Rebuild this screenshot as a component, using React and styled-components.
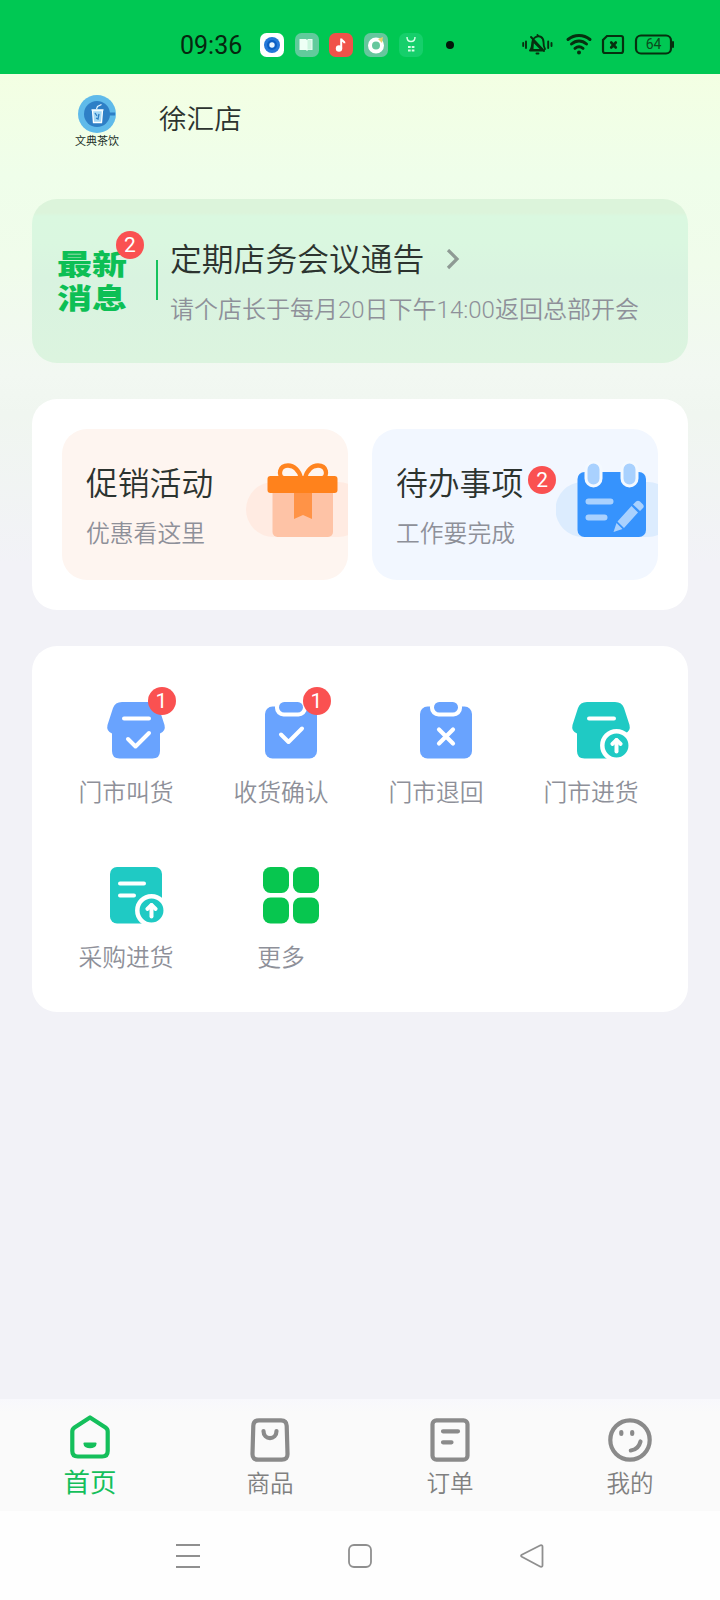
import styled, { createGlobalStyle } from 'styled-components'

const GlobalStyle = createGlobalStyle`
  * { box-sizing: border-box; }
  body {
    margin: 0;
    font-family: Roboto, "Noto Sans CJK SC", sans-serif;
    color: #2c332f;
    background: #f2f2f7;
  }
  svg { display: block; flex: none; }
`

const Page = styled.div`
  width: 720px;
  height: 1600px;
  display: flex;
  flex-direction: column;
  overflow: hidden;
  background: #f2f2f7;
`

const StatusBar = styled.div`
  height: 74px;
  flex: none;
  display: flex;
  align-items: center;
  padding: 16px 46px 0 180px;
  background: #00c853;
  color: #06260f;
`
const Time = styled.div`
  width: 80px;
  padding-top: 2px;
  font-size: 25px;
  line-height: 30px;
`
const AppIcons = styled.div`
  display: flex;
  gap: 10.7px;
`
const Dot = styled.div`
  width: 8px;
  height: 8px;
  margin-left: 23px;
  border-radius: 50%;
  background: #03170a;
`
const SystemIcons = styled.div`
  margin-left: auto;
  display: flex;
  align-items: center;
`

const Main = styled.main`
  flex: 1;
  padding: 0 32px;
  background: linear-gradient(#f3ffe3 0px, #effeea 100px, #f0fceb 190px, #f2f8f2 300px, #f0f6f0 340px, #f2f2f7 490px);
`
const StoreHeader = styled.header`
  height: 125px;
  display: flex;
  padding: 21px 0 0 39px;
`
const Brand = styled.div`
  width: 52px;
  display: flex;
  flex-direction: column;
  align-items: center;
`
const BrandName = styled.div`
  font-family: "Noto Sans CJK SC", sans-serif;
  font-size: 11px;
  line-height: 14px;
  white-space: nowrap;
  color: #223029;
`
const StoreName = styled.h1`
  margin: 6px 0 0 36px;
  font-size: 27.6px;
  line-height: 38px;
  font-weight: 350;
`

const Notice = styled.section`
  height: 164px;
  display: flex;
  padding: 0 24px;
  border-radius: 25px;
  background: linear-gradient(#dcf4db 0, #dcf4db 14px, #daf8e0 17px, #daf7e0 44px, #d9f3e0 80px, #dcf4df 164px);
`
const NoticeTag = styled.div`
  position: relative;
  width: 70px;
  height: 68px;
  margin-top: 50px;
`
const TagText = styled.div`
  padding-left: 1px;
  font-size: 35px;
  line-height: 41px;
  font-weight: 900;
  color: #0dbf55;
  white-space: nowrap;
  transform: scaleY(0.82);
  transform-origin: top;
`
const Badge = styled.span`
  display: flex;
  align-items: center;
  justify-content: center;
  width: 28px;
  height: 28px;
  border-radius: 50%;
  background: #fa5151;
  color: #fff;
  font-size: 21px;
  line-height: 28px;
  font-weight: 400;
`
const PinnedBadge = styled(Badge)`
  position: absolute;
  top: ${p => p.$top}px;
  left: ${p => p.$left}px;
`
const Divider = styled.div`
  width: 2px;
  height: 40px;
  margin: 61px 12px 0 30px;
  background: #16c35d;
`
const NoticeTitle = styled.h2`
  display: flex;
  align-items: center;
  gap: 21px;
  margin: 38px 0 0;
  font-size: 31.8px;
  line-height: 46px;
  font-weight: 350;
`
const Muted = styled.p`
  margin: ${p => p.$top || 0}px 0 0;
  font-size: ${p => p.$size || 23.8}px;
  line-height: 34px;
  font-weight: 350;
  color: #8e9099;
  white-space: nowrap;
`

const Panel = styled.section`
  margin-top: 36px;
  border-radius: 25px;
  background: #fff;
`
const PromoRow = styled(Panel)`
  height: 211px;
  display: flex;
  gap: 24px;
  padding: 30px;
`
const Promo = styled.div`
  width: 286px;
  height: 151px;
  display: flex;
  justify-content: space-between;
  padding-left: 24px;
  border-radius: 25px;
  overflow: hidden;
  background: ${p => p.$bg};
`
const PromoText = styled.div`
  padding-top: 32px;
`
const PromoTitle = styled.h3`
  display: flex;
  align-items: flex-start;
  gap: 5px;
  margin: 0 -60px 0 0;
  font-size: 31.8px;
  line-height: 46px;
  font-weight: 350;
  white-space: nowrap;
  ${Badge} { margin-top: 5px; }
`

const MenuGrid = styled(Panel)`
  height: 366px;
  display: grid;
  grid-template-columns: repeat(4, 155px);
  grid-auto-rows: 165px;
  padding: 51px 0 0 16.5px;
`
const MenuItem = styled.div`
  display: flex;
  flex-direction: column;
  align-items: center;
`
const MenuIcon = styled.div`
  position: relative;
  width: 68px;
  height: 68px;
  margin-left: 19px;
`

const TabBar = styled.nav`
  height: 112px;
  flex: none;
  display: grid;
  grid-template-columns: repeat(4, 1fr);
  background: linear-gradient(#f8f8fc, #fafafa 14px);
`
const Tab = styled.div`
  display: flex;
  flex-direction: column;
  align-items: center;
  padding-top: ${p => (p.$active ? 14 : 17)}px;
  font-size: ${p => (p.$active ? 26.5 : 23.5)}px;
  line-height: 36px;
  font-weight: ${p => (p.$active ? 400 : 350)};
  color: ${p => (p.$active ? '#14bf5b' : '#808080')};
`
const TabLabel = styled.span`
  margin-top: ${p => (p.$active ? 4 : 2)}px;
`
const NavBar = styled.div`
  height: 89px;
  flex: none;
  display: flex;
  justify-content: space-between;
  padding: 32px 175px 0;
  background: #fefefe;
`

const BLUE = '#69a3fe'
const TEAL = '#1fcac4'

const Tile = ({ color, children }) => (
  <svg width="24" height="24" viewBox="0 0 24 24">
    <rect width="24" height="24" rx="6.500" fill={color} />
    {children}
  </svg>
)

const StatusApps = () => (
  <AppIcons>
    <Tile color="#fff">
      <circle cx="12" cy="12" r="8" fill="#2478d8" />
      <circle cx="12" cy="12" r="5" fill="#0b5fc4" />
      <circle cx="12" cy="12" r="2.7" fill="#e8f6ff" />
    </Tile>
    <Tile color="#61cb9c">
      <path d="M4.500 6h6.500l1 1 1-1h4.500v11H13l-1 1-1-1H4.500z" fill="#eefff5" />
      <path d="M12.500 7h4v9.500h-4z" fill="#cdf5df" />
    </Tile>
    <Tile color="#f0524a">
      <circle cx="10" cy="15.500" r="3.200" fill="#fff" />
      <path d="M12.200 15.500V5.500c0 2.500 3.400 2.300 3.300 4.700" fill="none" stroke="#fff" strokeWidth="2" />
    </Tile>
    <Tile color="#66c79d">
      <circle cx="12" cy="12.500" r="6" fill="none" stroke="#fff" strokeWidth="4" />
      <path d="m14 6 5-2-1 6z" fill="#e6d36b" />
    </Tile>
    <Tile color="#16cf6b">
      <path d="M8 4c0 6 8 6 8 0" fill="none" stroke="#d5ffe5" strokeWidth="1.500" />
      <path d="M9 13h2.700v2H9zM12.700 13h2.700v2h-2.700zM9 16.500h2.700v2H9zM12.700 16.500h2.700v2h-2.700z" fill="#d5ffe5" />
    </Tile>
  </AppIcons>
)

const StatusSystem = () => (
  <svg width="152" height="24" viewBox="522 33 152 24" fill="none" stroke="#06300f" strokeLinecap="round">
    <g strokeWidth="1.9">
      <path d="M523.2 43v3M526 41.500v6.500M551.5 43v3M548.2 41.500v6.500" />
      <path d="M530 50.500h14M530 50.500c2-2 2-4 2.300-8 .2-1.800.7-3 1.600-4M535 37.500c4.500-3 8.500 0 8.500 4.500 0 3 .2 5 1.500 7M531 37l13 14M537.500 35v1M536.500 53.500h2" />
      <path d="M533 41l9 9h-9.500z" />
    </g>
    <g strokeWidth="3">
      <path d="M568 39.500c6.500-5.500 15.500-5.500 22 0M571.500 44c4.500-4 10.500-4 15 0M575 48.300c2.500-2 5.500-2 8 0" />
    </g>
    <circle cx="579" cy="52.500" r="2" fill="#06300f" stroke="none" />
    <path d="M607 36h14q2 0 2 2v13q0 2-2 2h-16q-2 0-2-2V40z" strokeWidth="2.200" />
    <path d="m611.200 42.500 4.600 5m0-5-4.600 5" strokeWidth="2.600" />
    <rect x="636" y="35.500" width="35" height="18" rx="5" strokeWidth="2.200" />
    <path d="M673 42v5" strokeWidth="2" />
    <text x="653.500" y="49.300" textAnchor="middle" fontSize="14" fill="#0c4a1c" stroke="none">64</text>
  </svg>
)

const Logo = () => (
  <svg width="38" height="38" viewBox="0 0 38 38">
    <circle cx="19" cy="19" r="19" fill="#5fbaea" />
    <circle cx="19" cy="19" r="13" fill="#2e7fc6" />
    <path d="M30 17.500h7v3h-7z" fill="#2e7fc6" />
    <path d="M14.500 15.500h10l-1 12h-8z" fill="#a5d8f5" stroke="#fff" strokeWidth="1.300" />
    <path d="M13.500 14.800h12M18.500 14l1-2.500 4-2" fill="none" stroke="#e9f7ff" strokeWidth="1.200" />
    <path d="m17 18 2 3m2-2-1 5-2-1" stroke="#2e7fc6" strokeWidth="1.300" fill="none" />
  </svg>
)

const Chevron = () => (
  <svg width="16" height="22" viewBox="0 1 16 22" fill="none" stroke="#8e9a94" strokeWidth="3.200">
    <path d="m3 2 9 9-9 9" />
  </svg>
)

const Gift = () => (
  <svg width="102" height="151" viewBox="0 0 102 151">
    <rect x="0" y="53" width="120" height="55" rx="27.500" fill="#ffebe2" />
    <rect x="26.500" y="58" width="60.500" height="50" rx="5" fill="#fec3a6" />
    <path d="M48 60h18v30l-9-4-9 4z" fill="#ff9347" />
    <g fill="none" stroke="#ff8420" strokeWidth="4.400">
      <path d="M55 49c-2-8-7-12.500-13-12.500-9 0-10 10-5 12.500M59 49c2-8 7-12.500 13-12.500 9 0 10 10 5 12.500" />
    </g>
    <rect x="21.500" y="47" width="70" height="17" rx="3" fill="#ff821c" />
  </svg>
)

const Planner = () => (
  <svg width="102" height="151" viewBox="0.500 0 102 151">
    <rect x="0" y="53" width="120" height="55" rx="27.500" fill="#dcecfe" />
    <rect x="22" y="43" width="68.500" height="65" rx="7" fill="#3693fd" />
    <g fill="#a9d1fe" stroke="#f4f9ff" strokeWidth="3">
      <rect x="30.500" y="33" width="15" height="24" rx="7.500" />
      <rect x="66.500" y="33" width="15" height="24" rx="7.500" />
    </g>
    <path d="M33 72.500h22M33 88.500h16" stroke="#a9d1fe" strokeWidth="6" strokeLinecap="round" />
    <path d="m58 103 3-9 6 6zM62 92.500l14-15.500 6.500 6.500-14 15.500zM77.500 75.500l3-3q2-1.500 4 0l3 3q1.500 2 0 3.500L84.500 82z" fill="#a9d1fe" />
  </svg>
)

// The menu icons share one 58x58 drawing area.
const Glyph = ({ children }) => (
  <svg width="68" height="68" viewBox="-5 -5 68 68" fill="none" strokeLinecap="round" strokeLinejoin="round">
    {children}
  </svg>
)

const Box = ({ color }) => (
  <>
    <path d="M15 0h28q7 0 9 6l5.500 17q1.500 6-4.500 8.500V49q0 7.500-7.500 7.500h-33Q5 56.500 5 49V31.500Q-1 29 .5 23L6 6q2-6 9-6z" fill={color} />
    <path d="M17 16.500h25" stroke="#fff" strokeWidth="4" />
  </>
)

const Clipboard = () => (
  <>
    <rect x="3" y="4.500" width="52" height="52" rx="7.500" fill={BLUE} />
    <rect x="13" y="-4" width="32" height="18.500" rx="8.500" fill="#fff" />
    <rect x="17" width="24" height="10.500" rx="5.200" fill={BLUE} />
  </>
)

const UpArrow = () => (
  <>
    <circle cx="44.500" cy="43.500" r="14.200" fill={TEAL} stroke="#fff" strokeWidth="4.500" />
    <path d="M44.500 49.500V38" stroke="#fff" strokeWidth="4" />
    <path d="m40.300 42 4.200-4 4.200 4" stroke="#fff" strokeWidth="3.800" />
  </>
)

const RequestIcon = () => (
  <Glyph>
    <Box color={BLUE} />
    <path d="m21 37 7.500 7.500L42 31" stroke="#fff" strokeWidth="4" />
  </Glyph>
)
const ConfirmIcon = () => (
  <Glyph>
    <Clipboard />
    <path d="m19 32.500 7.500 7.500L40 26.500" stroke="#fff" strokeWidth="4" />
  </Glyph>
)
const ReturnIcon = () => (
  <Glyph>
    <Clipboard />
    <path d="m22 27.500 14 14m0-14-14 14" stroke="#fff" strokeWidth="4.200" />
  </Glyph>
)
const StockIcon = () => (
  <Glyph>
    <Box color={TEAL} />
    <UpArrow />
  </Glyph>
)
const PurchaseIcon = () => (
  <Glyph>
    <rect x="3" width="52" height="56.500" rx="7" fill={TEAL} />
    <path d="M13 16.500h24M13 28.500h14" stroke="#fff" strokeWidth="4" />
    <UpArrow />
  </Glyph>
)
const MoreIcon = () => (
  <Glyph>
    <g fill="#07c64f">
      <rect x="1" width="26" height="26" rx="7.500" />
      <rect x="31" width="26" height="26" rx="7.500" />
      <rect x="1" y="30.500" width="26" height="26" rx="7.500" />
      <rect x="31" y="30.500" width="26" height="26" rx="7.500" />
    </g>
  </Glyph>
)

const menu = [
  { name: '门市叫货', icon: <RequestIcon />, count: 1 },
  { name: '收货确认', icon: <ConfirmIcon />, count: 1 },
  { name: '门市退回', icon: <ReturnIcon /> },
  { name: '门市进货', icon: <StockIcon /> },
  { name: '采购进货', icon: <PurchaseIcon /> },
  { name: '更多', icon: <MoreIcon /> },
]

const TabGlyph = ({ color = '#8a8a8a', children }) => (
  <svg width="48" height="48" viewBox="0 0 48 48" fill="none" stroke={color} strokeWidth="4.200" strokeLinecap="round" strokeLinejoin="round">
    {children}
  </svg>
)

const tabs = [
  {
    name: '首页',
    active: true,
    icon: (
      <TabGlyph color="#14bf5b">
        <path d="M24 4.500 8.500 14.500Q6.300 16 6.300 18.500V38q0 5.500 5.500 5.500h24.400q5.500 0 5.500-5.500V18.500q0-2.500-2.200-4z" />
        <path d="M18.500 30.500h11c0 5-11 5-11 0z" fill="#14bf5b" strokeWidth="2.200" />
      </TabGlyph>
    ),
  },
  {
    name: '商品',
    icon: (
      <TabGlyph>
        <path d="M13 4.300h22q5.500 0 5.700 5.500l.8 28q.2 5.900-5.700 5.900H12.200q-5.900 0-5.700-5.900l.8-28q.2-5.500 5.700-5.500z" />
        <path d="M17.500 15c0 9.500 13 9.500 13 0" />
      </TabGlyph>
    ),
  },
  {
    name: '订单',
    icon: (
      <TabGlyph>
        <rect x="6.500" y="4.300" width="35" height="39.400" rx="4" />
        <path d="M17 15.300h15M17 26.300h8.500" />
      </TabGlyph>
    ),
  },
  {
    name: '我的',
    icon: (
      <TabGlyph>
        <circle cx="24" cy="24" r="19.700" />
        <path d="M15.300 16v2M26.200 16v2M34.500 25.500Q32.500 33.500 24.800 34.500" />
      </TabGlyph>
    ),
  },
]

const App = () => {
  return (
    <>
      <GlobalStyle />
      <Page>
        <StatusBar>
          <Time>09:36</Time>
          <StatusApps />
          <Dot />
          <SystemIcons>
            <StatusSystem />
          </SystemIcons>
        </StatusBar>
        <Main>
          <StoreHeader>
            <Brand>
              <Logo />
              <BrandName>文典茶饮</BrandName>
            </Brand>
            <StoreName>徐汇店</StoreName>
          </StoreHeader>
          <Notice>
            <NoticeTag>
              <TagText>最新<br />消息</TagText>
              <PinnedBadge $top={-18} $left={60}>2</PinnedBadge>
            </NoticeTag>
            <Divider />
            <div>
              <NoticeTitle>
                定期店务会议通告
                <Chevron />
              </NoticeTitle>
              <Muted $top={10} $size={24}>请个店长于每月20日下午14:00返回总部开会</Muted>
            </div>
          </Notice>
          <PromoRow>
            <Promo $bg="#fef5f0">
              <PromoText>
                <PromoTitle>促销活动</PromoTitle>
                <Muted $top={10}>优惠看这里</Muted>
              </PromoText>
              <Gift />
            </Promo>
            <Promo $bg="#f2f7ff">
              <PromoText>
                <PromoTitle>
                  待办事项
                  <Badge>2</Badge>
                </PromoTitle>
                <Muted $top={10}>工作要完成</Muted>
              </PromoText>
              <Planner />
            </Promo>
          </PromoRow>
          <MenuGrid>
            {menu.map(item => (
              <MenuItem key={item.name}>
                <MenuIcon>
                  {item.icon}
                  {item.count && <PinnedBadge $top={-10} $left={46}>{item.count}</PinnedBadge>}
                </MenuIcon>
                <Muted $top={11}>{item.name}</Muted>
              </MenuItem>
            ))}
          </MenuGrid>
        </Main>
        <TabBar>
          {tabs.map(tab => (
            <Tab key={tab.name} $active={tab.active}>
              {tab.icon}
              <TabLabel $active={tab.active}>{tab.name}</TabLabel>
            </Tab>
          ))}
        </TabBar>
        <NavBar>
          <svg width="26" height="26" viewBox="0 0 26 26" stroke="#8f8f8f" strokeWidth="2">
            <path d="M1 2h24M1 13h24M1 24h24" />
          </svg>
          <svg width="26" height="26" viewBox="0 0 26 26" fill="none" stroke="#8f8f8f" strokeWidth="1.800">
            <rect x="2" y="2" width="22" height="22" rx="5" />
          </svg>
          <svg width="26" height="26" viewBox="0 0 26 26" fill="none" stroke="#8f8f8f" strokeWidth="1.800" strokeLinejoin="round">
            <path d="M21.500 2.300 2.800 11.800q-1.500 1 0 2l18.700 9.900q2 .5 2-1.500V3.800q0-2-2-1.500z" />
          </svg>
        </NavBar>
      </Page>
    </>
  )
}

export default App
